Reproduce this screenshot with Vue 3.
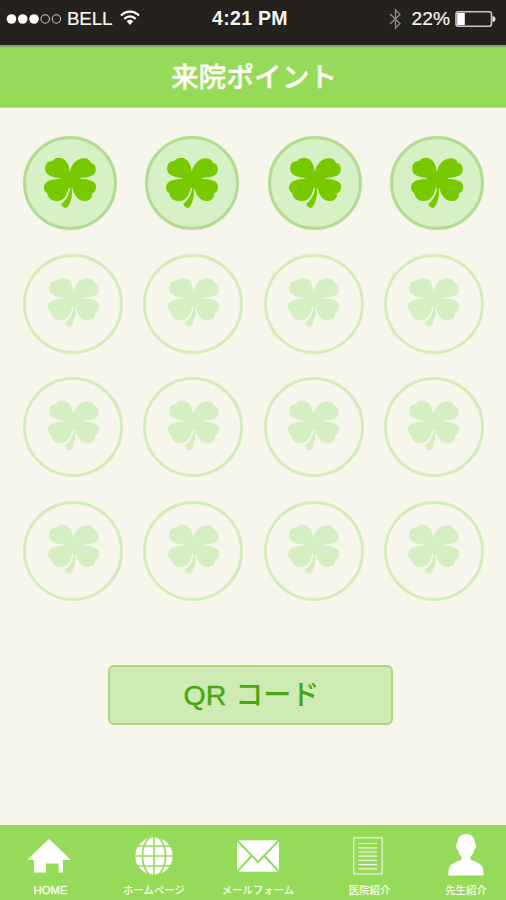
<script setup>
const stampRows = [
  { earned: true, count: 4 },
  { earned: false, count: 4 },
  { earned: false, count: 4 },
  { earned: false, count: 4 },
]
const tabs = [
  { icon: 'home', label: 'HOME' },
  { icon: 'globe', label: 'ホームページ' },
  { icon: 'mail', label: 'メールフォーム' },
  { icon: 'doc', label: '医院紹介' },
  { icon: 'person', label: '先生紹介' },
]
</script>

<template>
  <div class="screen">
    <div class="status">
      <div class="left">
        <svg class="dots" width="56" height="12" viewBox="0 0 56 12">
          <g fill="#fff"><circle cx="5.5" cy="6" r="4.8" /><circle cx="16.7" cy="6" r="4.8" /><circle cx="28" cy="6" r="4.8" /></g>
          <g fill="none" stroke="#c5c4c0" stroke-width="1.1"><circle cx="39.2" cy="6" r="4.2" /><circle cx="50.4" cy="6" r="4.2" /></g>
        </svg>
        <span class="carrier">BELL</span>
        <svg class="wifi" width="20" height="16" viewBox="0 0 20 16" fill="none" stroke="#fff" stroke-width="2.2">
          <path d="M1 5.5C6 .2 14 .2 19 5.5M4.3 9C7.6 5.6 12.4 5.6 15.7 9" />
          <path d="M6.7 11.3Q10 8.4 13.3 11.3L10 15Z" fill="#fff" stroke="none" />
        </svg>
      </div>
      <div class="time">4:21 PM</div>
      <div class="right">
        <svg class="bt" width="13" height="22" viewBox="0 0 13 22" fill="none" stroke="#8b8985" stroke-width="1.4">
          <path d="M1 6L11 15.5L6.5 20V2L11 6.5L1 16" />
        </svg>
        <span class="percent">22%</span>
        <svg width="41" height="18" viewBox="0 0 41 18">
          <rect x="1" y="1.7" width="35.5" height="14.6" rx="2.2" fill="none" stroke="#c9c8c5" stroke-width="1.6" />
          <rect x="2.2" y="2.9" width="7.6" height="12.2" fill="#fff" />
          <path d="M37.5 6Q40.5 6.5 40.5 9T37.5 12Z" fill="#e5e4e2" />
        </svg>
      </div>
    </div>
    <header class="title"><h1>来院ポイント</h1></header>
    <main>
      <div class="stamps">
        <div v-for="(row, i) in stampRows" :key="i" class="stamp-row" :class="{ earned: row.earned }">
          <div v-for="n in row.count" :key="n" class="stamp">
            <svg class="clover" viewBox="84 94 162 158">
              <path d="M164 140C163 117 152 96 132 96C122 96 114 100 112 106C96 105 87 118 90 134C92 150 112 155 134 158V161C108 161 88 168 86 184C85 194 89 200 96 204C98 219 110 228 126 228C146 227 157 210 161 188H165C164 206 152 226 139 236C138 243 148 250 156 248C168 236 174 208 170 190H173C177 210 190 228 209 228C226 227 233 218 232 204C241 202 246 192 244 180C241 166 218 161 197 161V158C216 157 242 153 243 136C244 122 240 114 229 112C226 102 216 97 205 98C182 100 169 119 164 140Z" />
            </svg>
          </div>
        </div>
      </div>
      <button class="qr" type="button"><span class="latin">QR</span><span class="kana">コード</span></button>
    </main>
    <nav>
      <a v-for="tab in tabs" :key="tab.icon" class="tab" :class="tab.icon">
        <span class="icon">
          <svg v-if="tab.icon === 'home'" width="44" height="34" viewBox="0 0 44 34" fill="#fff">
            <path d="M22 0L44 21H36V33.5H31.5V24.5H19V33.5H7V21H0Z" />
          </svg>
          <svg v-else-if="tab.icon === 'globe'" width="38" height="38" viewBox="0 0 38 38">
            <circle cx="19" cy="19" r="18.7" fill="#fff" />
            <g fill="none" stroke="#96da59" stroke-width="1.6">
              <path d="M19 0V38M0 19H38M3 9H35M3 29H35" />
              <ellipse cx="19" cy="19" rx="11.5" ry="20" />
            </g>
          </svg>
          <svg v-else-if="tab.icon === 'mail'" width="42" height="32" viewBox="0 0 42 32">
            <rect y=".3" width="42" height="31.4" fill="#fff" />
            <path d="M0 .3L21 22L42 .3M0 31.7L15 15.5M42 31.7L27 15.5" fill="none" stroke="#96da59" stroke-width="2" />
          </svg>
          <svg v-else-if="tab.icon === 'doc'" width="30" height="38" viewBox="0 0 30 38" fill="none" stroke="#eff9df">
            <rect x=".8" y=".8" width="28.4" height="36.2" stroke-width="1.1" />
            <path d="M5.5 6.5H24M5.5 10.8H24M5.5 15H24M5.5 19.2H24M5.5 23.4H24M5.5 27.6H24M5.5 31.8H24" stroke-width="1.2" />
          </svg>
          <svg v-else width="36" height="42" viewBox="0 0 36 42" fill="#fff">
            <path d="M18 0C24 0 27 4 27 10C29.2 11 28.2 15 26.3 15.5C25.5 19 24 21.5 22.5 22.5V26C29 28 34.5 30 35.2 35.5L35.7 41.5H.3L.8 35.5C1.5 30 7 28 13.5 26V22.5C12 21.5 10.5 19 9.7 15.5C7.8 15 6.8 11 9 10C9 4 12 0 18 0Z" />
          </svg>
        </span>
        <span class="label">{{ tab.label }}</span>
      </a>
    </nav>
  </div>
</template>

<style>
body { margin: 0; }
</style>

<style scoped>
.screen {
  display: flex;
  flex-direction: column;
  width: 506px;
  height: 900px;
  overflow: hidden;
  background: #f6f6ec;
  font-family: "Liberation Sans", "Noto Sans CJK JP", sans-serif;
}
.status {
  display: grid;
  grid-template-columns: 1fr auto 1fr;
  align-items: center;
  box-sizing: border-box;
  height: 45px;
  padding: 0 10px 8px 6px;
  background: #25211d;
  color: #f5f5f3;
  font-size: 18.5px;
}
.left, .right { display: flex; align-items: center; }
.right { justify-content: flex-end; }
.carrier { margin-left: 5px; font-size: 18.8px; letter-spacing: -0.2px; -webkit-text-stroke: 0.2px #f5f5f3; }
.wifi { margin: 0 0 1px 8px; }
.time {
  margin-right: 2px;
  font-weight: 700;
  font-size: 19.5px;
  letter-spacing: 0.3px;
}
.bt { margin-right: 10px; }
.percent { margin-right: 5px; font-size: 19.2px; -webkit-text-stroke: 0.2px #f5f5f3; }
.title {
  box-sizing: border-box;
  height: 63px;
  padding-bottom: 4px;
  border-top: 2px solid #83a767;
  border-bottom: 1px solid #b5e28a;
  background: #96da59;
  display: flex;
  align-items: center;
  justify-content: center;
}
h1 {
  margin: 0 0 0 2px;
  color: #fffff5;
  font: 500 27.7px/40px "Noto Sans CJK JP", sans-serif;
  -webkit-text-stroke: 0.4px #fffff5;
}
main {
  flex: 1;
  display: flex;
  flex-direction: column;
  align-items: center;
  padding-top: 28px;
}
.stamps {
  width: 461px;
  margin-left: 1px;
  display: flex;
  flex-direction: column;
  gap: 23.7px;
}
.stamp-row { display: flex; justify-content: space-between; }
.stamp {
  box-sizing: border-box;
  width: 100px;
  height: 100px;
  border: 3px solid #d3ecbb;
  border-radius: 50%;
  display: flex;
  align-items: center;
  justify-content: center;
}
.clover { width: 53px; height: 51px; fill: #d5efc3; margin-bottom: 3px; }
.earned .stamp {
  width: 94px;
  height: 94px;
  border-color: #b3dc92;
  background: #d7f0c6;
}
.earned .clover { width: 54px; height: 52px; fill: #77ca00; margin-bottom: 0; }
.qr {
  box-sizing: border-box;
  width: 285px;
  height: 60px;
  margin: 64px 5px 0 0;
  padding: 0;
  border: 2px solid #abd777;
  border-radius: 6px;
  background: #ceebb4;
  color: #48a711;
  display: flex;
  align-items: center;
  justify-content: center;
  gap: 9px;
}
.latin { font: 28.5px/40px "Liberation Sans", sans-serif; -webkit-text-stroke: 0.4px #48a711; }
.kana { margin-right: -2px; padding-bottom: 4px; font: 500 28px/40px "Noto Sans CJK JP", sans-serif; }
nav {
  height: 75px;
  display: grid;
  grid-template-columns: 101px 106px 102px 121px 72px;
  background: #96da59;
}
.tab {
  display: flex;
  flex-direction: column;
  align-items: center;
  color: #fafff0;
}
.icon {
  display: flex;
  align-items: center;
  box-sizing: border-box;
  height: 42px;
  margin-top: 9px;
}
.icon svg { display: block; }
.home .icon { padding: 2px 4px 0 0; }
.mail .icon { padding-top: 2px; }
.doc .icon { padding-right: 3px; }
.globe .icon, .doc .icon { height: 44px; margin-bottom: -2px; }
.label {
  margin-top: 6px;
  white-space: nowrap;
  font: 500 10.4px/16px "Noto Sans CJK JP", sans-serif;
}
.home .label { font: 11.3px/16px "Liberation Sans", sans-serif; -webkit-text-stroke: 0.3px #fafff0; }
</style>
